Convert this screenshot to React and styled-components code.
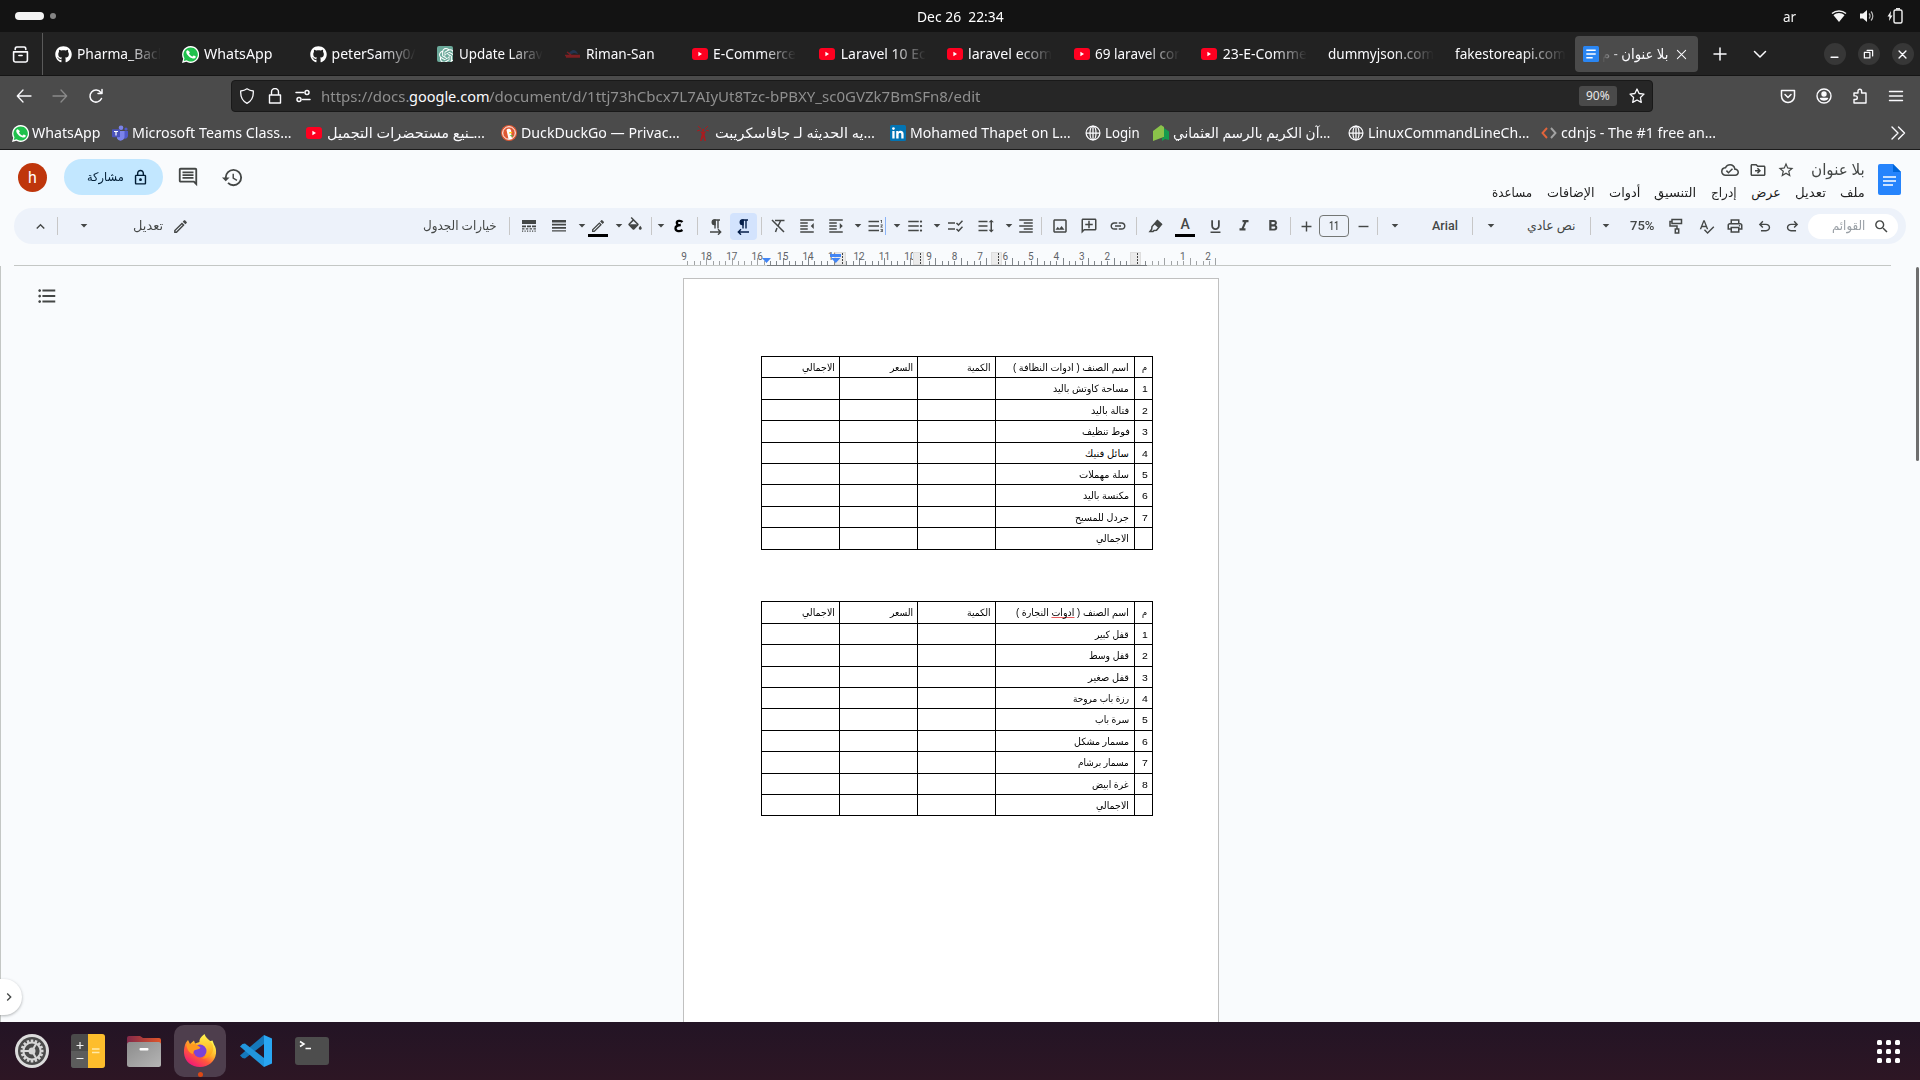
import React, { useLayoutEffect, useRef, useState } from 'react';
import styled, { createGlobalStyle, css } from 'styled-components';
import * as Md from 'react-icons/md';
import * as Fa from 'react-icons/fa';
import * as Si from 'react-icons/si';

const UI = `"Noto Sans", "Open Sans", "DejaVu Sans", sans-serif`;
const DOCS = `Roboto, "Noto Sans", "DejaVu Sans", sans-serif`;

const GlobalStyle = createGlobalStyle`
  * { box-sizing: border-box; }
  html, body { margin: 0; padding: 0; background: #f9fbfd; overflow: hidden; }
  svg { display: block; flex: none; }
`;

/* ---------- text that condenses to its column ---------- */
const FitBox = styled.span`
  display: block;
  flex: 0 0 ${(p) => p.$w}px;
  width: ${(p) => p.$w}px;
  font-size: ${(p) => p.$size}px;
  font-family: ${(p) => p.$font || 'inherit'};
  font-weight: ${(p) => p.$weight || 400};
  color: ${(p) => p.$color || 'inherit'};
  line-height: 20px;
  height: 20px;
  direction: ltr;
  white-space: pre;
  ${(p) => p.$fade === 'right' && css`mask-image: linear-gradient(to right, #000 60%, transparent 100%);`}
  ${(p) => p.$fade === 'left' && css`mask-image: linear-gradient(to left, #000 70%, transparent 100%);`}
`;
const FitInner = styled.span`
  display: inline-block;
  transform-origin: 0 50%;
`;
function Fit({ w, size = 14, font, color, weight, fade, dir = 'ltr', children }) {
  const ref = useRef(null);
  const [scale, setScale] = useState(1);
  useLayoutEffect(() => {
    const natural = ref.current.offsetWidth;
    if (natural) setScale(w / natural);
  }, [w, children]);
  return (
    <FitBox $w={w} $size={size} $font={font} $color={color} $weight={weight} $fade={fade}>
      <FitInner ref={ref} dir={dir} style={{ transform: `scaleX(${scale})` }}>{children}</FitInner>
    </FitBox>
  );
}

/* ---------- brand glyphs ---------- */
const Youtube = () => (
  <svg width="16" height="16" viewBox="0 0 16 16"><rect x="0" y="2" width="16" height="12" rx="3" fill="#ff0020" /><path d="M6.400 5.800v4.400L10 8z" fill="#fff" /></svg>
);
const Whatsapp = () => (
  <svg width="17" height="17" viewBox="0 0 24 24">
    <path d="M12 0a12 12 0 0 0-10.300 18L0 24l6.200-1.600A12 12 0 1 0 12 0z" fill="#fff" />
    <path d="M12 2a10 10 0 0 0-8.500 15.200l-1 3.900 4-1A10 10 0 1 0 12 2z" fill="#1fc14c" />
    <path d="M8.900 6.600c-.3-.6-.5-.6-.9-.6-1 0-2 1.100-2 2.600 0 1.600 1.100 3.100 1.400 3.500.3.400 2.500 3.700 5.900 5 2.900 1.100 3.500.6 4.100.5.7-.1 1.700-.8 1.900-1.600.2-.8.2-1.300-.2-1.500l-2.300-1.100c-.3-.1-.5-.1-.8.2l-.9 1.100c-.2.200-.4.300-.8.100-1.900-.8-3.400-2.200-4.300-3.900-.2-.3 0-.5.200-.7l.8-1c.1-.3.1-.4 0-.6z" fill="#fff" />
  </svg>
);
const Github = () => <Fa.FaGithub size={17} color="#fff" />;
const OpenAi = () => (
  <svg width="16" height="16" viewBox="0 0 16 16">
    <rect width="16" height="16" rx="2" fill="#6ba99a" />
    {Si.SiOpenai ? <Si.SiOpenai x="2" y="2" width="12" height="12" color="#fff" /> : null}
  </svg>
);
const Riman = () => (
  <svg width="16" height="16" viewBox="0 0 16 16"><path d="M3 8c1-2 3-3 5-4 3 0 4 2 5 4l-4-1-3 1z" fill="#24344f" /><path d="M0 9.500h15M1 11h14M2 6l4 3" stroke="#7c1f22" strokeWidth="1.400" /></svg>
);
const DocsTab = () => (
  <svg width="16" height="16" viewBox="0 0 16 16"><rect width="16" height="16" rx="1.500" fill="#2a86f3" /><path d="M3.300 4.300h9.400M3.300 8h9.400M3.300 11.700h6.400" stroke="#fff" strokeWidth="1.600" /></svg>
);
const Teams = () => (
  <svg width="16" height="16" viewBox="0 0 16 16">
    <circle cx="9" cy="2.800" r="2.300" fill="#7b83eb" /><circle cx="14" cy="4" r="1.600" fill="#5059c9" />
    <path d="M11 6h5v5a3 3 0 0 1-4 2.500z" fill="#5059c9" /><path d="M5 6h7.500v6a4 4 0 0 1-7.500 1.500z" fill="#7b83eb" />
    <rect y="4.300" width="8" height="8" rx=".8" fill="#4b53bc" /><path d="M2 6.500h4M4 6.500v4" stroke="#fff" strokeWidth="1.200" />
  </svg>
);
const Duck = () => (
  <svg width="16" height="16" viewBox="0 0 16 16">
    <circle cx="8" cy="8" r="8" fill="#de5833" /><circle cx="8" cy="8" r="6.300" fill="none" stroke="#fff" strokeWidth="1" />
    <path d="M5.500 5c1.200-2 4-1.700 4.600.5.400 2-.2 2.700.3 4.200L11 14H7.500z" fill="#fff" /><path d="M8 7.500c1.500-.6 3-.5 3.300 0-.3.700-2 1-3.300 1z" fill="#fdd20a" />
    <path d="M8.500 10.500l3 1.500v-2z" fill="#4cba3c" />
  </svg>
);
const RedTower = () => (
  <svg width="16" height="16" viewBox="0 0 16 16"><path d="M5 16l1.800-7L5 6.500h6L9.500 9l1.500 7H9.500L8.200 12 6.500 16zM7 4h2v2H7z" fill="#a81c1f" /><path d="M3 1l3 3M13 1l-3 3M2 6l3-1M14 6l-3-1" stroke="#a81c1f" strokeWidth="1" /></svg>
);
const Linkedin = () => (
  <svg width="16" height="16" viewBox="0 0 16 16"><rect width="16" height="16" rx="1.500" fill="#0274b3" /><path d="M2.300 6h2.300v7.500H2.300zM6.200 6h2.200v1c.8-1.700 5.200-1.900 5.200 1.900v4.600h-2.300V9.400c0-2-2.700-1.800-2.700 0v4.100H6.200z" fill="#fff" /><circle cx="3.450" cy="3.600" r="1.350" fill="#fff" /></svg>
);
const Globe = () => (
  <svg width="16" height="16" viewBox="0 0 16 16" fill="none" stroke="#fbfbfe" strokeWidth="1.250"><circle cx="8" cy="8" r="6.900" /><ellipse cx="8" cy="8" rx="3" ry="6.900" /><path d="M1 8h14M8 1v14" /></svg>
);
const Quran = () => (
  <svg width="16" height="16" viewBox="0 0 16 16"><path d="M8 0l3 2v10l-3 1-8 3V6z" fill="#8bc34a" /><path d="M11 3l5 3.500V15l-4-1-3 2v-3l2-1z" fill="#149b4e" /></svg>
);
const Cdn = () => (
  <svg width="16" height="12" viewBox="0 0 16 12" fill="none" strokeWidth="1.900"><path d="M6 1L1.500 6 6 11" stroke="#e2643b" /><path d="M10 1l4.500 5L10 11" stroke="#a3a3a3" /></svg>
);

/* ---------- line icon ---------- */
const Line = ({ d, s = 16, w = 1.3, c = '#fbfbfe', children }) => (
  <svg width={s} height={s} viewBox="0 0 16 16" fill="none" stroke={c} strokeWidth={w} strokeLinecap="round" strokeLinejoin="round">
    {d ? <path d={d} /> : null}{children}
  </svg>
);

/* ---------- shell ---------- */
const Screen = styled.div`
  width: 1920px; height: 1080px; display: flex; flex-direction: column;
  font-family: ${UI}; background: #f9fbfd; overflow: hidden;
`;
const TopBar = styled.div`
  height: 32px; background: #131313; color: #f2f2f2; display: flex; align-items: center; flex: none;
`;
const Part = styled.div`
  flex: 0 0 ${(p) => p.$w}px; display: flex; align-items: center; height: 100%;
  gap: ${(p) => p.$gap || 0}px; padding: ${(p) => p.$p || 0};
  justify-content: ${(p) => p.$j || 'flex-start'};
`;
const Pill = styled.i`width: 29px; height: 8px; border-radius: 4px; background: #f4f4f4;`;
const Dot = styled.i`width: 6px; height: 6px; border-radius: 50%; background: #858585;`;

const TabBar = styled.div`
  height: 44px; background: #222; border-bottom: 1px solid #151515; display: flex; align-items: center; flex: none; color: #fbfbfe; padding-top: 1px;
`;
const FirefoxView = styled.div`
  width: 43px; height: 100%; border-right: 1px solid #5a5a5a; display: flex; align-items: center; padding-left: 12px; flex: none; margin-right: 4px;
`;
const Tab = styled.div`
  flex: 0 0 127.3px; height: 36px; padding-left: 8px; display: flex; align-items: center; gap: 5px; overflow: hidden;
`;
const TabIcon = styled.span`flex: 0 0 17px; display: flex; justify-content: center;`;
const ActiveTab = styled.div`
  flex: 0 0 123px; height: 36px; border-radius: 4px; background: #4b4b4b; display: flex; align-items: center; padding: 0 11px 0 8px;
  justify-content: space-between;
`;
const TabTools = styled.div`display: flex; align-items: center; gap: 24px; padding-left: 14px; width: 125px; flex: none;`;
const Windows = styled.div`display: flex; gap: 12px; padding-left: 1px;`;
const WinBtn = styled.div`
  width: 22px; height: 22px; border-radius: 50%; background: #373737; display: flex; align-items: center; justify-content: center;
`;

const NavBar = styled.div`
  height: 40px; background: #4b4b4b; display: flex; align-items: center; flex: none; 
`;
const UrlBar = styled.div`
  width: 1422px; height: 32px; background: #262626; border: 1px solid #191919; border-radius: 4px; display: flex; align-items: center;
  padding: 0 7px; color: #8f8f8f;
`;
const Zoom = styled.div`
  width: 38px; height: 20px; border-radius: 3px; background: #4a4a4a; display: flex; align-items: center; justify-content: center; margin: 0 12px 0 auto;
`;
const Bookmarks = styled.div`
  height: 34px; background: #4b4b4b; border-bottom: 1px solid #1b1b1b; display: flex; align-items: center; flex: none; color: #fbfbfe; padding: 1px 0 0 12px;
`;
const Bookmark = styled.div`
  display: flex; align-items: center; gap: ${(p) => p.$gap}px; margin-right: ${(p) => p.$after}px; flex: none; height: 32px;
`;

/* ---------- docs header ---------- */
const Header = styled.header`height: 58px; display: flex; flex: none; justify-content: space-between; color: #1f1f1f; font-family: ${DOCS};`;
const HeadLeft = styled.div`display: flex; align-items: center; padding: 0 0 4px 18px;`;
const Avatar = styled.div`
  width: 29px; height: 29px; border-radius: 50%; background: #bf360c; color: #fff; font: 16px Roboto, sans-serif; display: flex; align-items: center; justify-content: center;
`;
const Share = styled.div`
  width: 99px; height: 36px; margin: 0 14px 0 17px; border-radius: 18px; background: #c2e7ff; display: flex; align-items: center; gap: 8px; padding-left: 23px; color: #001d35;
`;
const HeadRight = styled.div`display: flex; padding: 0 19px 0 0; gap: 13px;`;
const TitleCol = styled.div`display: flex; flex-direction: column; align-items: flex-end; padding-top: 9px;`;
const TitleRow = styled.div`display: flex; align-items: center; height: 22px; color: #444746;`;
const MenuRow = styled.nav`display: flex; gap: 14.4px; height: 22px; align-items: center; margin-top: 1px;`;
const Logo = styled.div`padding-top: 14px;`;

/* ---------- toolbar ---------- */
const Toolbar = styled.div`
  height: 36px; width: 1892px; margin-left: 14px; border-radius: 18px; background: #edf2fa; display: flex; align-items: center; flex: none; color: #444746;
  font-family: ${DOCS};
`;
const Slot = styled.div`
  flex: 0 0 ${(p) => p.$w}px; min-width: 0; height: ${(p) => p.$h || 27}px; margin-left: ${(p) => p.$m}px; display: flex; align-items: center; justify-content: center;
  ${(p) => p.$on && css`background: #d3e3fd; border-radius: 4px; color: #041e49;`}
  ${(p) => p.$box && css`border: 1px solid #747775; border-radius: 4px;`}
`;
const Sep = styled.i`flex: 0 0 1px; height: 18px; background: ${(p) => p.$c || '#c7c7c7'}; margin-left: ${(p) => p.$m}px;`;
const Swatch = styled.div`
  display: flex; flex-direction: column; align-items: center; justify-content: flex-end; width: 20px; height: 21px; border-bottom: 3px solid #000; flex: none;
`;
const Search = styled.div`
  flex: 0 0 90px; height: 25px; margin-left: 8px; border-radius: 13px; background: #fff; display: flex; align-items: center; justify-content: flex-end; gap: 8px; padding-right: 8px; color: #9aa0a6;
`;
const Caret = ({ m }) => (
  <Slot $w={8} $m={m}><svg width="8" height="4" viewBox="0 0 8 4"><path d="M.7 0h6.600L4 3.600z" fill="#444746" /></svg></Slot>
);
const I = ({ n, s = 18, flip, c }) => {
  const C = Md[n];
  return C ? <C size={s} color={c} transform={flip ? 'scale(-1 1)' : undefined} /> : null;
};
const Tool = ({ m, w = 16, on, children }) => <Slot $w={w} $m={m} $on={on}>{children}</Slot>;
const Undo = ({ flip }) => (
  <svg width="17" height="17" viewBox="0 -960 960 960" fill="#444746" transform={flip ? 'scale(-1 1)' : undefined}>
    <path d="M280-200v-80h284q63 0 109.500-40T720-420q0-60-46.500-100T564-560H312l104 104-56 56-200-200 200-200 56 56-104 104h252q97 0 166.500 63T800-420q0 94-69.500 157T564-200H280Z" />
  </svg>
);
const Bucket = () => (
  <svg width="18" height="18" viewBox="0 0 24 24" fill="#444746">
    <path d="M16.560 8.940L7.620 0 6.210 1.410l2.380 2.380-5.150 5.150c-.59.59-.59 1.540 0 2.120l5.500 5.500c.29.29.68.44 1.060.44s.77-.15 1.060-.44l5.500-5.500c.59-.58.59-1.530 0-2.120zM5.210 10L10 5.210 14.790 10zM19 11.500s-2 2.170-2 3.500c0 1.100.9 2 2 2s2-.9 2-2c0-1.330-2-3.500-2-3.500z" />
    <path d="M5.500 10h9L10 14.800z" />
  </svg>
);
const Ltr = ({ flip, c = '#444746' }) => (
  <svg width="15" height="17" viewBox="0 0 15 17" fill="none" stroke={c} strokeWidth="1.400">
    <path d="M7 2v8.500M10 2v8.500M12 2H6.500a2.300 2.300 0 0 0 0 4.600H7" /><path d="M7 2a2.300 2.300 0 0 0 0 4.600z" fill={c} />
    <path d={flip ? 'M13 14H2.500M5 11.300L2.300 14 5 16.700' : 'M2 14h10.500M10 11.300l2.700 2.700-2.700 2.700'} />
  </svg>
);
const Stripes = ({ dash }) => (
  <svg width="14" height="12" viewBox="0 0 14 12" fill="#444746">
    {dash ? (
      <g><rect width="14" height="4" /><path d="M0 5.500h4v1.800H0zM5 5.500h4v1.800H5zM10 5.500h4v1.800h-4zM0 8.200h2.500v1.200H0zM3.800 8.200h2.500v1.200H3.800zM7.600 8.200h2.500v1.200H7.600zM11.400 8.200h2.500v1.200h-2.500zM0 10.500h1.200v1.300H0zM2.500 10.500h1.200v1.300H2.500zM5 10.500h1.200v1.300H5zM7.500 10.500h1.200v1.300H7.500zM10 10.500h1.200v1.300H10zM12.500 10.500h1.200v1.300h-1.200z" /></g>
    ) : <path d="M0 0h14v2.500H0zM0 3.800h14v1.800H0zM0 7h14v1.700H0zM0 10.200h14v1.400H0z" />}
  </svg>
);

/* ---------- ruler ---------- */
const tall = (k) => 706.3 + 25.45 * k;
function Ruler() {
  const ticks = [];
  for (let i = -3; i <= 80; i++) {
    const x = Math.round(706.3 + (25.45 / 4) * i);
    if (x >= 683 && x <= 1216) ticks.push([x, i % 4 === 0]);
  }
  const labels = [['9', 684]];
  [18, 17, 16, 15, 14, 13, 12, 11, 10].forEach((n, i) => labels.push([String(n), tall(i)]));
  [9, 8, 7, 6, 5, 4, 3, 2].forEach((n, i) => labels.push([String(n), tall(9 + i) - 6.300]));
  labels.push(['1', 1182.8], ['2', 1208]);
  return (
    <svg width="1920" height="22" viewBox="0 244 1920 22">
      <rect x="14" y="265" width="1877" height="1" fill="#c4c7c5" />
      <rect x="767" y="265" width="380" height="1" fill="#777b7e" />
      {ticks.map(([x, t]) => <rect key={x} x={x} y={t ? 258 : 261} width="1" height={t ? 7 : 4} fill={x < 767 || x > 1147 ? '#a0a3a5' : '#80868b'} />)}
      {labels.map(([t, x], i) => <text key={i} x={x} y="260" fontSize="10" fontFamily='Roboto, "Liberation Sans", sans-serif' textAnchor="middle" fill="#5f6368">{t}</text>)}
      {[835, 913, 991, 1130].map((x) => (
        <g key={x}><rect x={x + .5} y="252.500" width="10" height="12" fill="#ebebeb" stroke="#dedede" /><path d={`M${x + 7.500} 253v11`} stroke="#444" strokeDasharray="2 1" /></g>
      ))}
      <path d="M762 258h9l-4.500 5zM830 254h11v3h-11zM831 258h9.500l-4.700 5z" fill="#4285f4" />
    </svg>
  );
}

/* ---------- document ---------- */
const Canvas = styled.main`flex: none; height: 756px; display: flex; border-left: 1px solid #c4c7c5; position: relative; padding-top: 12px;`;
const Side = styled.div`flex: 0 0 682px; padding: 7px 0 0 35px;`;
const Page = styled.div`width: 536px; border: 1px solid #c0c0c0; border-bottom: 0; background: #fff; padding: 77px 0 0 77px; flex: none; display: flex; flex-direction: column; gap: 51px;`;
const Table = styled.div`width: 392px; border: solid #000; border-width: 0 1px 1px 0;`;
const Row = styled.div`display: grid; grid-template-columns: 78px 78px 78px 139px 18px; height: ${(p) => p.$h}px;`;
const Cell = styled.div`
  border: solid #000; border-width: 1px 0 0 1px; display: flex; justify-content: flex-end; align-items: center; padding: 1px ${(p) => p.$r || 4}px 0 0; color: #000;
  min-width: 0; min-height: 0;
`;
const Scroll = styled.i`position: absolute; right: 1px; top: 1px; width: 3px; height: 194px; border-radius: 2px; background: #6e6e6e;`;
const Expand = styled.div`
  position: absolute; left: -1px; bottom: 7px; width: 22px; height: 36px; border-radius: 0 18px 18px 0; background: #fff; box-shadow: 0 1px 3px rgba(60,64,67,.4);
  display: flex; align-items: center; padding-left: 1px;
`;
const Misspelt = styled.span`text-decoration: underline solid #e8595c 1px; text-underline-offset: 1px; text-decoration-skip-ink: none;`;

const cleaning = [
  ['1', 'مساحة كاوتش باليد', 76, 22], ['2', 'فتالة باليد', 38, 21], ['3', 'فوط تنظيف', 47.5, 22], ['4', 'سائل فنيك', 44, 21],
  ['5', 'سلة مهملات', 50, 21], ['6', 'مكنسة باليد', 46, 22], ['7', 'جردل للمسيح', 54, 21], ['', 'الاجمالي', 33, 22],
];
const carpentry = [
  ['1', 'قفل كبير', 34, 21], ['2', 'قفل وسط', 40, 22], ['3', 'قفل صغير', 41, 21], ['4', 'رزة باب مروحة', 56, 21], ['5', 'سرة باب', 34, 22],
  ['6', 'مسمار مشكل', 55, 21], ['7', 'مسمار برشام', 51, 22], ['8', 'غرة ابيض', 37, 21], ['', 'الاجمالي', 33, 21],
];
const DF = '"Liberation Sans", "Noto Sans", "DejaVu Sans", sans-serif';
const T = (p) => <Fit size={10} font={DF} dir="rtl" {...p} />;
function Sheet({ head, headW, headH, rows }) {
  return (
    <Table>
      <Row $h={headH}>
        <Cell><T w={33}>الاجمالي</T></Cell><Cell><T w={23}>السعر</T></Cell><Cell><T w={24}>الكمية</T></Cell>
        <Cell $r={5}><T w={headW}>{head}</T></Cell><Cell $r={5}><T w={5}>م</T></Cell>
      </Row>
      {rows.map(([n, name, w, h], i) => (
        <Row key={i} $h={h}><Cell /><Cell /><Cell /><Cell $r={5}><T w={w}>{name}</T></Cell><Cell $r={5}>{n ? <T w={5.500} size={9.5}>{n}</T> : null}</Cell></Row>
      ))}
    </Table>
  );
}

/* ---------- dock ---------- */
const Dock = styled.footer`height: 58px; flex: none; background: linear-gradient(#231425, #2d1624); display: flex; align-items: center; justify-content: space-between; padding: 0 20px 0 6px;`;
const Apps = styled.div`display: flex; gap: 4px;`;
const DockItem = styled.div`width: 52px; height: 52px; border-radius: 10px; display: flex; align-items: center; justify-content: center; position: relative; background: ${(p) => (p.$on ? '#4e3e4d' : 'transparent')};`;
const Running = styled.i`position: absolute; bottom: 0; left: 24px; width: 5px; height: 5px; border-radius: 50%; background: #dd4814;`;
const Grid9 = styled.div`display: grid; grid-template-columns: repeat(3, 5px); gap: 4px;`;
const Sq = styled.i`height: 5px; border-radius: 1.5px; background: #fff;`;

const teeth = Array.from({ length: 16 }, (_, i) => i * 22.5);
const Settings = () => (
  <svg width="34" height="34" viewBox="-17 -17 34 34">
    <circle r="17" fill="#dcdcdc" /><circle r="14" fill="#4a4a4a" />
    {teeth.map((a) => <rect key={a} x="-1.300" y="-11.500" width="2.600" height="3" fill="#d6d6d6" transform={`rotate(${a})`} />)}
    <circle r="8.600" fill="none" stroke="#d6d6d6" strokeWidth="2" /><circle r="3.500" fill="#d6d6d6" />
    {[0, 120, 240].map((a) => <path key={a} d="M2 0h6" stroke="#d6d6d6" strokeWidth="2" transform={`rotate(${a + 60})`} />)}
  </svg>
);
const Calc = () => (
  <svg width="34" height="34" viewBox="0 0 34 34"><rect width="34" height="34" rx="3" fill="#4a4a4a" /><path d="M0 17h17v17H3a3 3 0 0 1-3-3z" fill="#5c5c5c" /><path d="M17 0h14a3 3 0 0 1 3 3v28a3 3 0 0 1-3 3H17z" fill="#fdbd2c" /><path d="M5.500 11.500h7M9 8v7M5.500 24.500h7" stroke="#eee" strokeWidth="1.200" /><path d="M21 15h7.500M21 18.500h7.500" stroke="#ffe9a8" strokeWidth="1.300" /></svg>
);
const Files = () => (
  <svg width="34" height="31" viewBox="0 0 34 31">
    <defs><linearGradient id="fo"><stop offset="0" stopColor="#82284a" /><stop offset="1" stopColor="#e2562a" /></linearGradient><linearGradient id="fg" x2="1" y2="1"><stop offset="0" stopColor="#8c8c8c" /><stop offset="1" stopColor="#b5b5b5" /></linearGradient></defs>
    <path d="M0 2a2 2 0 0 1 2-2h11l3 2h16a2 2 0 0 1 2 2v8H0z" fill="url(#fo)" /><rect y="6" width="34" height="25" rx="2.500" fill="url(#fg)" /><rect x="12.500" y="12" width="9" height="2.500" rx="1" fill="#fff" />
  </svg>
);
const Firefox = () => (
  <svg width="34" height="34" viewBox="0 0 34 34">
    <defs>
      <linearGradient id="fx" x1=".85" y1=".1" x2=".2" y2=".95"><stop offset="0" stopColor="#fff44f" /><stop offset=".35" stopColor="#ffb02a" /><stop offset=".6" stopColor="#ff5a3a" /><stop offset="1" stopColor="#f0147c" /></linearGradient>
      <linearGradient id="fy" x2="0" y2="1"><stop offset="0" stopColor="#fff44f" /><stop offset="1" stopColor="#ff980e" /></linearGradient>
    </defs>
    <path d="M3 8.500l2-2.500 2 4 4-3.500 1 3 9-3c4 0 7 1 8.500 0l1.500 4c2 3 2.300 6 2 9-1 8-7.500 13.500-16 13.500S1.500 27.500 1 19c-.2-4 .5-7.500 2-10.500z" fill="url(#fx)" />
    <path d="M21.500 0c-4 3-5.500 5.500-5 8.500 5 .5 8 4 8 8.500 0 4-3 7-6 7.800 6 .2 11-3.800 11.800-9.800.2-4-1.300-6-3.300-8-2-2-4.500-3.500-5.500-7z" fill="url(#fy)" />
    <circle cx="17" cy="17" r="6.500" fill="#7a42d8" /><path d="M3.500 9.500l4 1 5-.5 5 3.500c-1 2-4 2-5.500 2.500-1.500 1-2 2.500-2 4-4-1-6.500-5-6.500-10.500z" fill="#ff9a1f" />
  </svg>
);
const Code = () => (
  <svg width="32" height="32" viewBox="0 0 32 32"><path d="M24 0v9L5 23.500 2.500 23 0 20.500z" fill="#1578bb" /><path d="M24 32v-9L5 8.500 2.500 9 0 11.500z" fill="#2196dd" /><path d="M24 0l8 3.500v25L24 32z" fill="#29a6f2" /></svg>
);
const Terminal = () => (
  <svg width="34" height="28" viewBox="0 0 34 28"><rect width="34" height="28" rx="3" fill="#4d4d4d" /><path d="M5 4.500l4 2.500-4 2.500M10.500 11.500H16" stroke="#fff" strokeWidth="1.500" fill="none" /></svg>
);

const tabs = [
  [Github, 'Pharma_Bacl', 84, 1], [Whatsapp, 'WhatsApp', 68], [Github, 'peterSamy0/', 84, 1], [OpenAi, 'Update Larav', 84, 1], [Riman, 'Riman-San', 69],
  [Youtube, 'E-Commerce', 83, 1], [Youtube, 'Laravel 10 Ec', 85, 1], [Youtube, 'laravel ecom', 84, 1], [Youtube, '69 laravel cor', 85, 1], [Youtube, '23-E-Comme', 84, 1],
  [null, 'dummyjson.com', 106, 1], [null, 'fakestoreapi.com', 111, 1],
];
const marks = [
  [Whatsapp, 'WhatsApp', 68, 3, 12], [Teams, 'Microsoft Teams Class…', 159, 4, 15], [Youtube, 'ـنيع مستحضرات التجميل…', 158, 5, 16], [Duck, 'DuckDuckGo — Privac…', 159, 4, 15],
  [RedTower, 'يه الحديثه لـ جافاسكريبت…', 160, 4, 15], [Linkedin, 'Mohamed Thapet on L…', 161, 4, 14], [Globe, 'Login', 35, 4, 13], [Quran, 'آن الكريم بالرسم العثماني…', 157, 4, 18], [Globe, 'LinuxCommandLineCh…', 161, 4, 12], [Cdn, 'cdnjs - The #1 free an…', 155, 4, 0],
];
const menus = [['مساعدة', 40], ['الإضافات', 48], ['أدوات', 31], ['التنسيق', 42], ['إدراج', 26], ['عرض', 29], ['تعديل', 31], ['ملف', 25]];

export default function App() {
  return (
    <Screen>
      <GlobalStyle />
      <TopBar>
        <Part $w={917} $p="0 0 0 15px" $gap={6}><Pill /><Dot /></Part>
        <Part $w={866} $p="0 0 1px"><Fit w={87} size={14.5} color="#fff">Dec 26  22:34</Fit></Part>
        <Part $w={137}><Fit w={13} size={14.5}>ar</Fit>
          <Part $w={100} $p="0 0 0 35px" $gap={12}>
            <svg width="16" height="14" viewBox="0 0 16 14"><path d="M1 4.500C5 1 11 1 15 4.500" stroke="#f4f4f4" strokeWidth="1.500" fill="none" /><path d="M2.500 6.200c3-2.800 8-2.800 11 0L8 13z" fill="#f4f4f4" /></svg>
            <svg width="16" height="14" viewBox="0 0 16 14"><path d="M1 4.500h3L8 1v12L4 9.500H1z" fill="#f4f4f4" /><path d="M10 4.500a3.500 3.500 0 0 1 0 5M12 2.500a6.500 6.500 0 0 1 0 9" stroke="#bbb" strokeWidth="1.200" fill="none" /></svg>
            <svg width="16" height="16" viewBox="0 0 16 16"><path d="M4 3L.5 8.500h2L2 13l3.500-5.500h-2z" fill="#f4f4f4" /><rect x="7" y="2" width="8" height="13" rx="1.500" fill="none" stroke="#f4f4f4" strokeWidth="1.400" /><path d="M9 .8h4" stroke="#f4f4f4" strokeWidth="1.500" /></svg>
          </Part>
        </Part>
      </TopBar>

      <TabBar>
        <FirefoxView><Line w={1.5} s={17} d="M1.500 5.500h13v8a1.500 1.500 0 0 1-1.500 1.500H3a1.500 1.500 0 0 1-1.500-1.500zM3 3.200C3 2 3.500 1 4.500 1h7C12.500 1 13 2 13 3.200M6.500 9h3" /></FirefoxView>
        {tabs.map(([Icon, t, w, f], i) => (
          <Tab key={i}>{Icon ? <TabIcon><Icon /></TabIcon> : null}<Fit w={w} size={14} fade={f ? 'right' : undefined}>{t}</Fit></Tab>
        ))}
        <ActiveTab><DocsTab /><Part $w={71}><Fit w={66} size={14} dir="rtl" fade="left">بلا عنوان - م</Fit></Part><Line s={11} w={1.500} d="M2 2l12 12M14 2L2 14" /></ActiveTab>
        <TabTools>
          <Line s={16} w={1.5} d="M8 2v12M2 8h12" />
          <Line s={16} w={1.5} d="M2.500 5.500L8 11l5.500-5.500" />
        </TabTools>
        <Windows>
          <WinBtn><Line s={11} w={2} d="M3 12h10" /></WinBtn>
          <WinBtn><Line s={11} w={1.8} d="M2 5h8v8H2zM6 2h8v8" /></WinBtn>
          <WinBtn><Line s={11} w={2} d="M3 3l10 10M13 3L3 13" /></WinBtn>
        </Windows>
      </TabBar>

      <NavBar>
        <Part $w={231} $p="0 0 0 16px" $gap={20}>
          <Line d="M15 8H1.500M7 2L1.300 8 7 14" /><Line c="#8a8a8a" d="M1 8h13.500M9 2l5.700 6L9 14" /><Line s={16} w={1.5} d="M13.500 10.500A6 6 0 1 1 12.800 4.500M14 1.500v4h-4" />
        </Part>
        <UrlBar>
          <Part $w={82} $gap={12}>
            <Line d="M8 .8c2 1.500 4 2 6.300 2.200.3 5-1.500 10-6.300 12.300C3.200 13 1.400 8 1.700 3 4 2.800 6 2.300 8 .8z" />
            <Line w={1.400} d="M2.500 7h11v8h-11zM4.500 7V4a3.500 3.500 0 0 1 7 0v3" />
            <Line w={1.500} d="M1 4.500h7.500M15 11.500H7.500"><circle cx="12" cy="4.500" r="2" /><circle cx="4" cy="11.500" r="2" /></Line>
          </Part>
          <Fit w={88} size={14.5}>https://docs.</Fit><Fit w={80} size={14.5} color="#fbfbfe">google.com</Fit><Fit w={491} size={14.5}>/document/d/1ttj73hCbcx7L7AIyUt8Tzc-bPBXY_sc0GVZk7BmSFn8/edit</Fit>
          <Zoom><Fit w={24} size={12} color="#e8e8e8">90%</Fit></Zoom>
          <Line w={1.300} d="M8 1l2.100 4.500 4.900.6-3.600 3.400.9 4.900L8 12l-4.300 2.400.9-4.900L1 6.100l4.900-.6z" />
        </UrlBar>
        <Part $w={267} $p="0 0 0 127px" $gap={20}>
          <Line w={1.5} d="M1.500 2.500h13V8a6.500 6.500 0 0 1-13 0zM5 6.500l3 3 3-3" />
          <Line w={1.4}><circle cx="8" cy="8" r="7" /><circle cx="8" cy="6" r="2" fill="#fff" /><path d="M4.500 10.500h7a4 3 0 0 1-7 0z" fill="#fff" /></Line>
          <Line w={1.4} d="M2 5h4V3a1.800 1.800 0 0 1 3.600 0v2H14v10H2v-3.500h1.500a1.800 1.800 0 0 0 0-3.600H2z" />
          <Line w={1.4} d="M1.500 3.500h13M1.500 8h13M1.500 12.500h13" />
        </Part>
      </NavBar>

      <Bookmarks>
        {marks.map(([Icon, t, w, g, a], i) => <Bookmark key={i} $gap={g} $after={a}><Icon /><Fit w={w} size={14}>{t}</Fit></Bookmark>)}
        <Part $w={190} $j="flex-end"><Line w={1.4} d="M2 2l6 6-6 6M8.500 2l6 6-6 6" /></Part>
      </Bookmarks>

      <Header>
        <HeadLeft>
          <Avatar>h</Avatar>
          <Share><Fit w={37} size={12} weight={500} dir="rtl">مشاركة</Fit><I n="MdOutlineLock" s={17} /></Share>
          <I n="MdOutlineComment" s={22} c="#444746" />
          <Part $w={50} $p="0 0 0 22px"><I n="MdHistory" s={23} c="#444746" /></Part>
        </HeadLeft>
        <HeadRight>
          <TitleCol>
            <TitleRow>
              <Part $w={90} $gap={10}><I n="MdOutlineCloudDone" s={18} /><I n="MdOutlineDriveFileMove" s={18} /><I n="MdStarBorder" s={18} /></Part>
              <Fit w={54} size={16} dir="rtl" color="#444746">بلا عنوان</Fit>
            </TitleRow>
            <MenuRow>{menus.map(([t, w]) => <Fit key={t} w={w} size={12.5} dir="rtl">{t}</Fit>)}</MenuRow>
          </TitleCol>
          <Logo><svg width="23" height="31" viewBox="0 0 23 31"><path d="M2 0h13l8 8v21a2 2 0 0 1-2 2H2a2 2 0 0 1-2-2V2a2 2 0 0 1 2-2z" fill="#2684fc" /><path d="M15 0l8 8h-8z" fill="#0066da" /><path d="M5 13h13M5 17h13M5 21h10" stroke="#fff" strokeWidth="1.700" /></svg></Logo>
        </HeadRight>
      </Header>

      <Toolbar>
        <Tool m={18}><I n="MdKeyboardArrowUp" s={17} /></Tool>
        <Sep $m={9} /><Caret m={22} />
        <Slot $w={30} $m={45}><Fit w={30} size={12.5} dir="rtl">تعديل</Fit></Slot>
        <Tool m={9}><I n="MdOutlineEdit" s={17} /></Tool>
        <Slot $w={74} $m={235}><Fit w={74} size={12.5} dir="rtl">خيارات الجدول</Fit></Slot>
        <Sep $m={12} />
        <Tool m={11}><Stripes dash /></Tool>
        <Tool m={14}><Stripes /></Tool>
        <Caret m={11} />
        <Tool m={2} w={20}><Swatch><I n="MdOutlineEdit" s={16} /></Swatch></Tool>
        <Caret m={7} />
        <Tool m={4}><Bucket /></Tool>
        <Sep $m={8} /><Caret m={5} />
        <Slot $w={12} $m={8}><svg width="10" height="14" viewBox="0 0 10 14"><path d="M8.500 3C7 1.300 2.600 1.400 2.800 4c.1 1.800 2 2.200 4 2C3.500 6.300 1.400 7.300 1.500 9.500c.2 3 4.500 3.200 7 1.500" fill="none" stroke="#000" strokeWidth="2.300" /></svg></Slot>
        <Sep $m={12} />
        <Tool m={9}><Ltr /></Tool>
        <Tool m={7} w={27} on><Ltr flip c="#041e49" /></Tool>
        <Sep $m={4} />
        <Tool m={9}><svg width="16" height="14" viewBox="0 0 16 14" fill="none" stroke="#444746" strokeWidth="1.500"><path d="M4 1.500h9.500M1 1l12 12M9.500 2L7.300 6.500M6 9l-1.500 4" /></svg></Tool>
        <Tool m={12}><I n="MdFormatIndentIncrease" flip /></Tool>
        <Tool m={13}><I n="MdFormatIndentDecrease" flip /></Tool>
        <Caret m={10} />
        <Tool m={6}><I n="MdFormatListNumberedRtl" /></Tool>
        <Sep $m={1} $c="#8ab4f8" /><Caret m={7} />
        <Tool m={6}><I n="MdFormatListBulleted" flip /></Tool>
        <Caret m={10} />
        <Tool m={6}><svg width="16" height="12" viewBox="0 0 16 12" fill="none" stroke="#444746" strokeWidth="1.500"><path d="M1 3h7M1 9h7M9.500 3L11.500 5l4-4.200M9.500 9l2 2 4-4.200" /></svg></Tool>
        <Tool m={15}><I n="MdFormatLineSpacing" flip /></Tool>
        <Caret m={11} />
        <Tool m={5}><I n="MdFormatAlignRight" s={18} /></Tool>
        <Sep $m={7} />
        <Tool m={10}><I n="MdOutlineImage" /></Tool>
        <Tool m={13}><I n="MdOutlineAddComment" flip /></Tool>
        <Tool m={13}><I n="MdLink" /></Tool>
        <Sep $m={10} />
        <Tool m={10}><svg width="15" height="15" viewBox="0 0 15 15"><path d="M9.500 1.500L4 7.500l-.3 2.800L2 12.500h3l1-1 2.500-.3 5-6z" fill="none" stroke="#444746" strokeWidth="1.500" /><path d="M9 1.200L13.800 5 10.500 9 6 5z" fill="#444746" /></svg></Tool>
        <Tool m={12} w={20}><Swatch><Fit w={9} size={14} weight={500}>A</Fit></Swatch></Tool>
        <Tool m={12}><I n="MdFormatUnderlined" s={17} /></Tool>
        <Tool m={13}><I n="MdFormatItalic" /></Tool>
        <Tool m={13}><I n="MdFormatBold" /></Tool>
        <Sep $m={9} />
        <Tool m={7}><I n="MdAdd" s={17} /></Tool>
        <Slot $w={30} $h={22} $m={5} $box><Fit w={10} size={12.5} weight={500}>11</Fit></Slot>
        <Tool m={6}><I n="MdRemove" s={17} /></Tool>
        <Sep $m={6} /><Caret m={13} />
        <Slot $w={26} $m={33}><Fit w={26} size={12.5} weight={500}>Arial</Fit></Slot>
        <Sep $m={14} /><Caret m={14} />
        <Slot $w={49} $m={32}><Fit w={49} size={12.5} dir="rtl">نص عادي</Fit></Slot>
        <Sep $m={14} /><Caret m={11} />
        <Slot $w={24} $m={20}><Fit w={24} size={12.5} weight={500}>75%</Fit></Slot>
        <Tool m={14}><svg width="14" height="16" viewBox="0 0 14 16" fill="none" stroke="#444746" strokeWidth="1.500"><path d="M3 1.500h9.500v4H3zM3 3.500H1V8h7v3M6.300 11h3.400v4H6.300z" /></svg></Tool>
        <Tool m={14}><I n="MdSpellcheck" s={17} /></Tool>
        <Tool m={13}><I n="MdOutlinePrint" s={18} /></Tool>
        <Tool m={13}><Undo /></Tool>
        <Tool m={12}><Undo flip /></Tool>
        <Search><Fit w={33} size={12.5} dir="rtl">القوائم</Fit><I n="MdSearch" s={17} c="#444746" /></Search>
      </Toolbar>
      <Ruler />

      <Canvas>
        <Side><I n="MdFormatListBulleted" s={22} c="#444746" /></Side>
        <Page>
          <Sheet head="اسم الصنف ( ادوات النظافة )" headW={116} headH={21} rows={cleaning} />
          <Sheet head={<>اسم الصنف ( <Misspelt>ادوات</Misspelt> النجارة )</>} headW={113} headH={22} rows={carpentry} />
        </Page>
        <Scroll />
        <Expand><I n="MdChevronRight" s={16} c="#444746" /></Expand>
      </Canvas>

      <Dock>
        <Apps>
          <DockItem><Settings /></DockItem><DockItem><Calc /></DockItem><DockItem><Files /></DockItem>
          <DockItem $on><Firefox /><Running /></DockItem><DockItem><Code /></DockItem><DockItem><Terminal /></DockItem>
        </Apps>
        <Grid9>{Array.from({ length: 9 }, (_, i) => <Sq key={i} />)}</Grid9>
      </Dock>
    </Screen>
  );
}
